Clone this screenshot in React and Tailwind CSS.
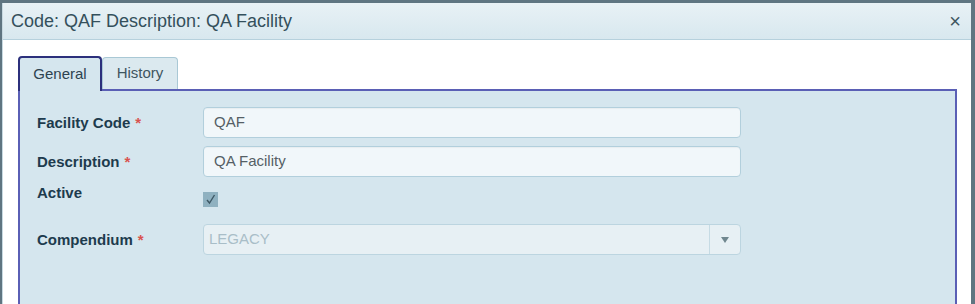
import React from 'react';

const Label = ({ children, required }) => (
  <div className="w-[166px] shrink-0 text-[15px] leading-[20px] font-bold text-[#1d3b4d]">
    {children}
    {required && <span className="ml-[5px] text-[#d9534f]">*</span>}
  </div>
);

const TextField = ({ value }) => (
  <div className="flex h-[31px] w-[538px] items-center rounded-[4px] border border-[#b2cfdc] bg-[#f1f7fa] px-[10px] text-[15px] text-[#555f66] shadow-[inset_0_1px_1px_rgba(0,0,0,0.04)]">
    {value}
  </div>
);

export default function App() {
  return (
    <div className="h-[304px] w-[975px] overflow-hidden bg-[#5f7581] pl-[2px] pr-[4px] pt-[3px] font-['Liberation_Sans',Arial,sans-serif]">
      <div className="h-full border-l border-[#c7d9e1] bg-white">
        <div className="flex h-[37px] items-center justify-between border-b border-[#b6d1dd] bg-gradient-to-b from-[#e8f1f5] to-[#d8e8ef] pl-[8px] pr-[10px]">
          <span className="text-[18px] text-[#34505c]">Code: QAF Description: QA Facility</span>
          <span className="text-[20px] leading-none text-[#3e5560]">×</span>
        </div>
        <div className="pl-[15px] pr-[14px] pt-[16px]">
          <div className="flex items-end">
            <div className="relative z-10 -mb-[2px] flex h-[35px] w-[84px] items-center justify-center rounded-t-[4px] border-2 border-b-0 border-[#2c307c] bg-[#d5e6ee] text-[15px] text-[#2d4350]">
              General
            </div>
            <div className="flex h-[32px] w-[76px] items-center justify-center rounded-t-[4px] border border-b-0 border-[#a9c8d5] bg-[#dbe9ef] text-[15px] text-[#3e5560]">
              History
            </div>
          </div>
          <div className="h-[220px] border-2 border-[#5a5fb5] bg-[#d5e6ee] pl-[17px] pt-[16px]">
            <div className="flex flex-col gap-[8px]">
              <div className="flex items-center">
                <Label required>Facility Code</Label>
                <TextField value="QAF" />
              </div>
              <div className="flex items-center">
                <Label required>Description</Label>
                <TextField value="QA Facility" />
              </div>
              <div className="-mt-[2px] flex items-start">
                <Label>Active</Label>
                <div className="mt-[9px] flex h-[15px] w-[15px] items-center justify-center bg-[#8fb1c0]">
                  <svg width="11" height="11" viewBox="0 0 11 11">
                    <path d="M2 6 L4.5 9 L9.5 1" fill="none" stroke="#3d5864" strokeWidth="1.4" />
                  </svg>
                </div>
              </div>
              <div className="mt-[9px] flex items-center">
                <Label required>Compendium</Label>
                <div className="flex h-[31px] w-[538px] items-stretch rounded-[4px] border border-[#bcd5e0] bg-[#e7f0f4]">
                  <div className="flex flex-1 items-center px-[5px] text-[15px] text-[#a9bec8]">LEGACY</div>
                  <div className="flex w-[31px] items-center justify-center border-l border-[#c6dbe4]">
                    <svg width="8" height="6" viewBox="0 0 8 6">
                      <path d="M0 0 L8 0 L4 6 Z" fill="#70878f" />
                    </svg>
                  </div>
                </div>
              </div>
            </div>
          </div>
        </div>
      </div>
    </div>
  );
}
